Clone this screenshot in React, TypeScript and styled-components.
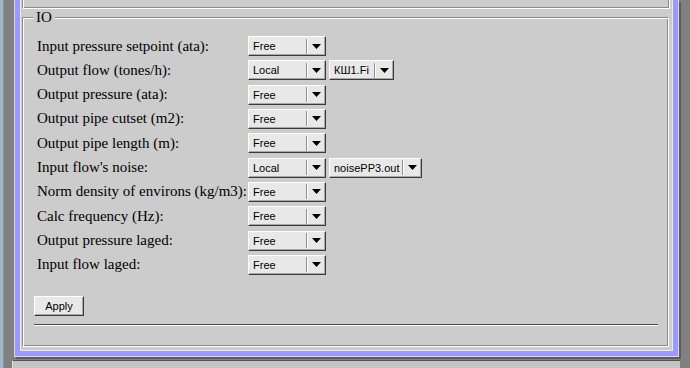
import { Fragment } from "react"
import styled, { createGlobalStyle } from "styled-components"

const Global = createGlobalStyle`
  html, body {
    margin: 0;
    padding: 0;
    background: #808080;
  }
`

const Page = styled.div`
  display: flex;
  width: 690px;
  height: 368px;
  overflow: hidden;
  background: #808080;
`

const DeskEdge = styled.div`
  width: 4px;
  flex: none;
  background: linear-gradient(to right, #a3b5c8 0, #a3b5c8 3px, #8595a6 3px);
`

const Column = styled.div`
  flex: 1;
  padding-left: 9px;
  display: flex;
  flex-direction: column;
`

const Frame = styled.div`
  margin-left: 1px;
  width: 665px;
  box-sizing: border-box;
  border: 1px solid #d8d8d8;
  border-top: none;
  padding: 0 5px 5px 5px;
  background: #9999ff;
  box-shadow: 2px 2px 0 #5c5c5c;
`

const Panel = styled.div`
  background: #cccccc;
  border: 1px solid #ececec;
  border-top: none;
  padding-bottom: 3px;
`

const TopBox = styled.div`
  height: 9px;
  box-sizing: border-box;
  margin: 0 2px 0 1px;
  border-left: 1px solid #8a8a8a;
  border-right: 1px solid #ffffff;
  border-bottom: 1px solid #ffffff;
  box-shadow: inset 1px 0 0 #ffffff, inset -1px -1px 0 #8a8a8a;
`

const Group = styled.fieldset`
  margin: 0 3px 0 1px;
  padding: 10px 10px 20px 11px;
  min-width: 0;
  border: 1px solid;
  border-color: #8a8a8a #ffffff #ffffff #8a8a8a;
  box-shadow: inset 1px 1px 0 #ffffff, inset -1px -1px 0 #8a8a8a;
`

const Legend = styled.legend`
  margin-left: -1px;
  padding: 0 3px;
  background: #cccccc;
  font: 15px/17px "Liberation Serif", "Times New Roman", serif;
  color: #000;
`

const Rows = styled.div`
  display: grid;
  grid-template-columns: 211px max-content max-content;
  grid-auto-rows: 20px;
  row-gap: 4.33px;
  column-gap: 3px;
  align-items: center;
`

const Label = styled.div`
  grid-column: 1;
  padding-left: 3px;
  font: 15px/17px "Liberation Serif", "Times New Roman", serif;
  color: #000;
  white-space: nowrap;
`

const SelectBox = styled.div<{ $w: number }>`
  display: flex;
  align-items: center;
  width: ${(p) => p.$w}px;
  height: 20px;
  box-sizing: border-box;
  background: #e8e8e8;
  border: 1px solid;
  border-color: #ffffff #3a3a3a #3a3a3a #ffffff;
  box-shadow: inset -1px -1px 0 #a8a8a8;
  font: 11px "Liberation Sans", Arial, sans-serif;
  color: #000;
`

const SelectText = styled.span`
  flex: 1;
  padding-left: 4px;
  white-space: nowrap;
  overflow: hidden;
`

const SelectSep = styled.span`
  width: 0;
  height: 15px;
  border-left: 1px solid #8e8e8e;
  border-right: 1px solid #ffffff;
`

const ArrowZone = styled.span`
  width: 17px;
  display: flex;
  justify-content: center;
  align-items: center;
`

const Apply = styled.button`
  display: block;
  margin-top: 21px;
  width: 50px;
  height: 20px;
  padding: 0;
  box-sizing: border-box;
  background: #e8e8e8;
  border: 1px solid;
  border-color: #ffffff #3a3a3a #3a3a3a #ffffff;
  box-shadow: inset -1px -1px 0 #a8a8a8;
  font: 11px "Liberation Sans", Arial, sans-serif;
  color: #000;
`

const Rule = styled.div`
  margin-top: 8px;
  height: 0;
  border-top: 1px solid #4a4a4a;
  border-bottom: 1px solid #ffffff;
`

const LowerBox = styled.div`
  margin-top: 3px;
  margin-left: -1px;
  flex: 1;
  width: 667px;
  border-top: 1px solid #555555;
  border-left: 1px solid #e0e0e0;
  background: #c4c4c4;
`

function Arrow() {
  return (
    <svg width="9" height="5" viewBox="0 0 9 5">
      <path d="M0 0H9L4.5 5Z" fill="#000" />
    </svg>
  )
}

function Select({ value, w }: { value: string; w: number }) {
  return (
    <SelectBox $w={w}>
      <SelectText>{value}</SelectText>
      <SelectSep />
      <ArrowZone>
        <Arrow />
      </ArrowZone>
    </SelectBox>
  )
}

type Row = { label: string; mode: string; source?: string; sw?: number }

const rows: Row[] = [
  { label: "Input pressure setpoint (ata):", mode: "Free" },
  { label: "Output flow (tones/h):", mode: "Local", source: "КШ1.Fi", sw: 65 },
  { label: "Output pressure (ata):", mode: "Free" },
  { label: "Output pipe cutset (m2):", mode: "Free" },
  { label: "Output pipe length (m):", mode: "Free" },
  { label: "Input flow's noise:", mode: "Local", source: "noisePP3.out", sw: 93 },
  { label: "Norm density of environs (kg/m3):", mode: "Free" },
  { label: "Calc frequency (Hz):", mode: "Free" },
  { label: "Output pressure laged:", mode: "Free" },
  { label: "Input flow laged:", mode: "Free" },
]

export default function App() {
  return (
    <Page>
      <Global />
      <DeskEdge />
      <Column>
        <Frame>
          <Panel>
            <TopBox />
            <Group>
              <Legend>IO</Legend>
              <Rows>
                {rows.map((r) => (
                  <Fragment key={r.label}>
                    <Label>{r.label}</Label>
                    <Select value={r.mode} w={78} />
                    {r.source ? <Select value={r.source} w={r.sw ?? 65} /> : <span />}
                  </Fragment>
                ))}
              </Rows>
              <Apply>Apply</Apply>
              <Rule />
            </Group>
          </Panel>
        </Frame>
        <LowerBox />
      </Column>
    </Page>
  )
}
